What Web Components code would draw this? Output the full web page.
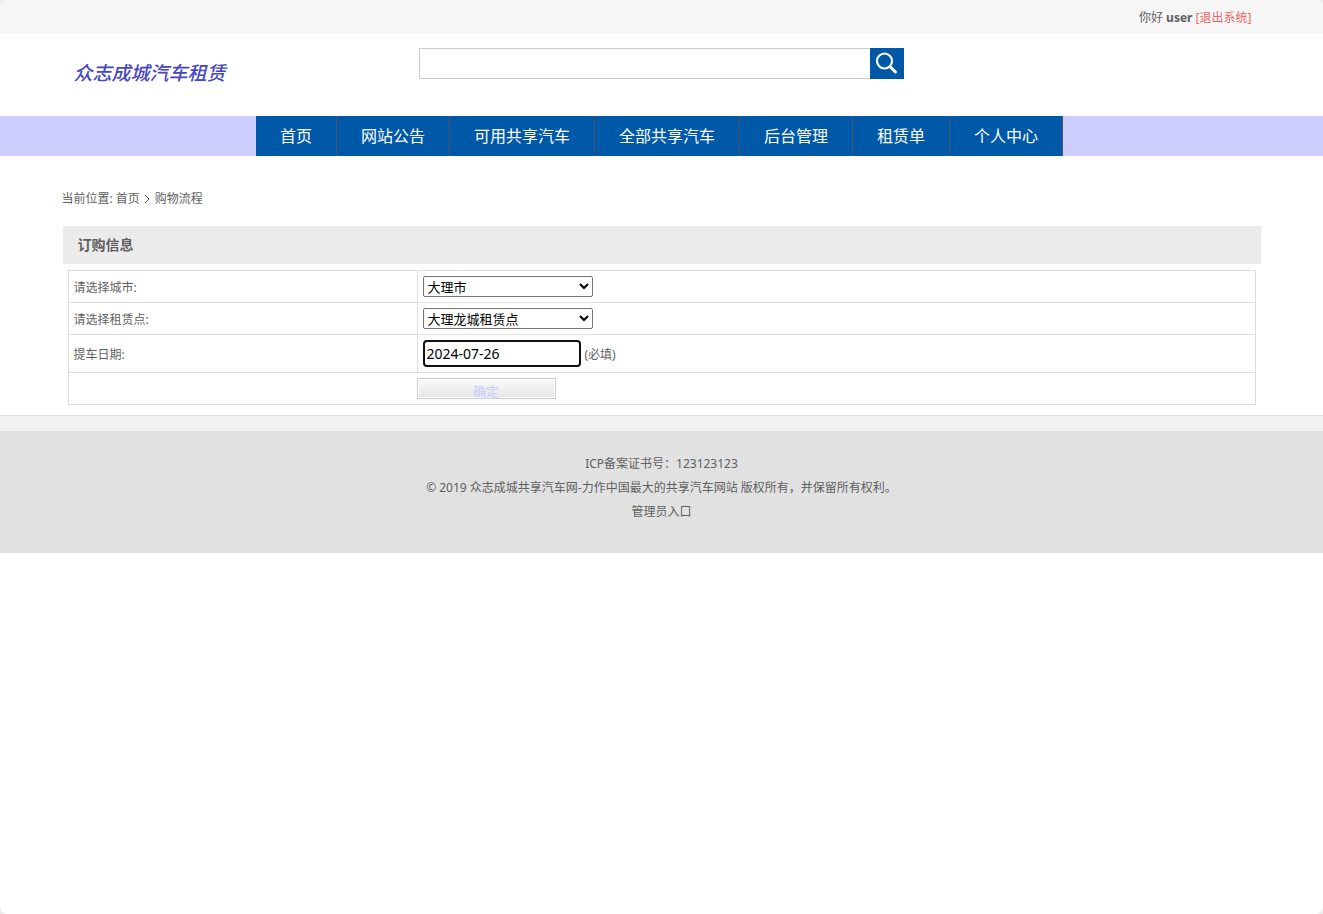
<!DOCTYPE html>
<html lang="zh-CN">
<head>
<meta charset="utf-8">
<title>众志成城汽车租赁</title>
<style>
  html { background: #ededed; }
  body { margin: 0; color: #5f5f5f; font: 12px/24px "Noto Sans", "Noto Sans CJK SC", sans-serif; }
</style>
</head>
<body>
<rental-page>
  <top-bar slot="top" user="user"></top-bar>
  <site-header slot="top">众志成城汽车租赁</site-header>
  <main-nav slot="top">
    <nav-item>首页</nav-item>
    <nav-item>网站公告</nav-item>
    <nav-item>可用共享汽车</nav-item>
    <nav-item>全部共享汽车</nav-item>
    <nav-item>后台管理</nav-item>
    <nav-item>租赁单</nav-item>
    <nav-item>个人中心</nav-item>
  </main-nav>
  <bread-crumb current="购物流程"></bread-crumb>
  <info-panel>
    <span slot="title">订购信息</span>
    <order-form></order-form>
  </info-panel>
  <site-footer slot="bottom">
    <span>ICP备案证书号：123123123</span>
    <span>© 2019 众志成城共享汽车网-力作中国最大的共享汽车网站 版权所有，并保留所有权利。</span>
    <admin-link>管理员入口</admin-link>
  </site-footer>
</rental-page>

<script>
  const define = (name, render) => customElements.define(name, class extends HTMLElement {
    constructor() {
      super();
      this.attachShadow({ mode: 'open' }).innerHTML =
        '<style>*{box-sizing:border-box}:host{box-sizing:border-box}</style>' + render(this);
    }
  });

  define('rental-page', () => `
    <style>
      :host { display: block; min-height: 100vh; background: #fff; border-radius: 8px; overflow: hidden; }
      main { max-width: 1200px; margin: 0 auto; padding: 31px 0 10px; }
    </style>
    <slot name="top"></slot>
    <main><slot></slot></main>
    <slot name="bottom"></slot>`);

  define('top-bar', el => `
    <style>
      :host { display: block; background: #f6f6f6; }
      div { max-width: 1200px; margin: 0 auto; padding: 2px 10px 0; line-height: 32px; text-align: right; }
      a { color: #f46262; text-decoration: none; }
    </style>
    <div>你好 <b>${el.getAttribute('user')}</b> <a href="#logout">[退出系统]</a></div>`);

  define('site-header', () => `
    <style>
      :host { display: block; }
      .inner { display: grid; grid-template-columns: 1fr 485px 1fr; align-items: start;
               max-width: 1200px; height: 82px; margin: 0 auto; padding-top: 14px; }
      .logo { padding: 12px 0 0 12px; color: #4646c0; text-decoration: none; font: italic 500 19px/24px "Noto Sans CJK SC", sans-serif; }
      form { display: flex; height: 31px; }
      input { flex: 1; min-width: 0; padding: 0 8px; border: 1px solid #ccc; border-right: 0; border-radius: 0; outline: 0; font: inherit; }
      button { display: grid; place-items: center; width: 34px; padding: 0; border: 0; background: #0058a9; }
    </style>
    <div class="inner">
      <a class="logo" href="#home"><slot></slot></a>
      <form role="search">
        <input type="text" aria-label="搜索">
        <button type="button" aria-label="搜索">
          <svg width="24" height="24" viewBox="0 0 24 24" fill="none" stroke="#fff">
            <circle cx="9.5" cy="9" r="7.5" stroke-width="2.2"/>
            <path d="M15 14.5L20.5 20" stroke-width="3" stroke-linecap="round"/>
          </svg>
        </button>
      </form>
    </div>`);

  define('main-nav', () => `
    <style>
      :host { display: block; background: #ccf; }
      nav { display: flex; justify-content: center; height: 40px; padding-right: 4px; }
    </style>
    <nav><slot></slot></nav>`);

  define('nav-item', () => `
    <style>
      :host { display: block; background: #0058a9; border-right: 1px solid #4a5564; }
      a { display: block; padding: 0 24px; color: #fff; font-size: 16px; line-height: 40px; text-decoration: none; white-space: nowrap; }
    </style>
    <a href="#"><slot></slot></a>`);

  define('bread-crumb', el => `
    <style>
      :host { display: block; margin-bottom: 15px; }
      nav { display: flex; align-items: center; gap: 3px; }
      a { color: inherit; text-decoration: none; }
      svg { margin: 0 2px 0 1px; }
    </style>
    <nav><span>当前位置:</span><a href="#home">首页</a>
      <svg width="6" height="10" viewBox="0 0 6 10" fill="none" stroke="#555"><path d="M1 1L5 5L1 9"/></svg>
      <span>${el.getAttribute('current')}</span></nav>`);

  define('info-panel', () => `
    <style>
      :host { display: block; margin: 0 1px; }
      h2 { margin: 0 0 6px; padding: 0 15px; background: #ebebeb; font-size: 14px; line-height: 38px; }
      div { padding: 0 5px; }
    </style>
    <h2><slot name="title"></slot></h2>
    <div><slot></slot></div>`);

  define('order-form', () => `
    <style>
      :host { display: block; }
      table { width: 100%; border-collapse: collapse; table-layout: fixed; }
      .name { width: 349px; }
      td, th { height: 32px; padding: 0 5px; border: 1px solid #ddd; font-weight: normal; text-align: left; }
      th { padding-top: 2px; }
      .date td, .date th { height: 38px; }
      .field { display: flex; align-items: center; gap: 4px; }
      .field span { padding-top: 2px; }
      select { width: 170px; height: 21px; padding: 0; border: 1px solid #767676; border-radius: 2px; background: #fff; color: #000; font: 13px "Noto Sans", "Noto Sans CJK SC", sans-serif; }
      input { width: 158px; height: 27px; padding: 0 2px; border: 2px solid #101010; border-radius: 4px; outline: 0; color: #000; font: 14px "Noto Sans", sans-serif; }
      .submit { padding: 0 0 0 348px; }
      button { display: block; width: 139px; height: 21px; padding: 2px 0 0; border: 1px solid #ccc; background: linear-gradient(#fafafa, #e6e6e6); box-shadow: inset 0 0 0 1px #fff;
               color: #ccf; font: 13px/19px "Noto Sans CJK SC", sans-serif; }
    </style>
    <form><table>
      <colgroup><col class="name"><col></colgroup>
      <tr><th scope="row"><label for="city">请选择城市:</label></th>
        <td><div class="field"><select id="city"><option>大理市</option></select></div></td></tr>
      <tr><th scope="row"><label for="store">请选择租赁点:</label></th>
        <td><div class="field"><select id="store"><option>大理龙城租赁点</option></select></div></td></tr>
      <tr class="date"><th scope="row"><label for="date">提车日期:</label></th>
        <td><div class="field"><input id="date" type="text" value="2024-07-26"><span>(必填)</span></div></td></tr>
      <tr><td class="submit" colspan="2"><button type="button">确定</button></td></tr>
    </table></form>`);

  define('site-footer', () => `
    <style>
      :host { display: block; border-top: 1px solid #ddd; background: #f1f1f1; padding-top: 15px; }
      footer { display: flex; flex-direction: column; align-items: center; padding: 21px 0 29px; background: #e1e1e1; text-align: center; }
    </style>
    <footer><slot></slot></footer>`);

  define('admin-link', () => `
    <style>
      :host { display: block; }
      a { color: inherit; text-decoration: none; }
    </style>
    <a href="#admin"><slot></slot></a>`);
</script>
</body>
</html>
